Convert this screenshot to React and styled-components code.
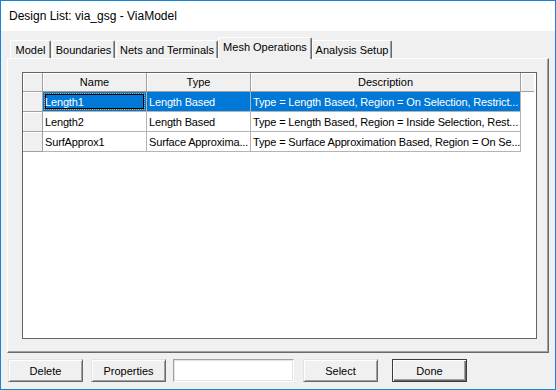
import React from 'react'
import styled, { createGlobalStyle } from 'styled-components'

const GlobalStyle = createGlobalStyle`
    html, body {
        margin: 0;
        padding: 0;
        background: #ffffff;
    }
    * {
        box-sizing: border-box;
    }
`

const Window = styled.div`
    width: 556px;
    height: 390px;
    border: 1px solid #1883d7;
    background: #f0f0f0;
    display: flex;
    flex-direction: column;
    font-family: 'Liberation Sans', Arial, sans-serif;
    font-size: 11px;
    color: #000;
`

const TitleBar = styled.div`
    height: 30px;
    background: #ffffff;
    display: flex;
    align-items: center;
    padding-left: 8px;
    padding-bottom: 1px;
    font-size: 12px;
`

const Body = styled.div`
    flex: 1;
    display: flex;
    flex-direction: column;
    padding: 5px 6px 7px 6px;
`

const TabStrip = styled.div`
    height: 22px;
    display: flex;
    align-items: flex-end;
    padding-left: 3px;
    position: relative;
    z-index: 1;
`

const Tab = styled.div`
    width: ${p => p.$width}px;
    height: ${p => (p.$active ? '22px' : '18px')};
    margin-right: ${p => (p.$active ? '0' : '1px')};
    margin-left: ${p => (p.$active ? '-1px' : '0')};
    margin-bottom: ${p => (p.$active ? '-1px' : '0')};
    padding-bottom: ${p => (p.$active ? '3px' : '0')};
    display: flex;
    align-items: center;
    justify-content: center;
    background: #f0f0f0;
    border-top: 1px solid #ffffff;
    border-left: 1px solid #ffffff;
    border-right: 1px solid #696969;
    box-shadow: inset -1px 0 0 #a0a0a0;
    border-radius: 2px 2px 0 0;
    white-space: nowrap;
`

const Panel = styled.div`
    height: 295px;
    display: flex;
    flex-direction: column;
    border-top: 1px solid #ffffff;
    border-left: 1px solid #ffffff;
    border-right: 1px solid #696969;
    border-bottom: 1px solid #696969;
    box-shadow: inset -1px -1px 0 #a0a0a0;
    padding: 13px 11px 13px 14px;
`

const Grid = styled.div`
    flex: 1;
    background: #ffffff;
    border: 1px solid #646464;
    display: flex;
    flex-direction: column;
`

const Row = styled.div`
    display: flex;
    height: ${p => p.$height}px;
`

const HeadCell = styled.div`
    width: ${p => p.$width}px;
    background: #f0f0f0;
    border-right: ${p => (p.$last ? 'none' : '1px solid #a0a0a0')};
    border-bottom: 1px solid #a0a0a0;
    box-shadow: inset 1px 1px 0 #ffffff;
    display: flex;
    align-items: center;
    justify-content: center;
    white-space: nowrap;
    overflow: hidden;
`

const Cell = styled.div`
    width: ${p => p.$width}px;
    background: ${p => (p.$selected ? '#0078d7' : '#ffffff')};
    color: ${p => (p.$selected ? '#ffffff' : '#000000')};
    border-right: 1px solid #b4b4b4;
    border-bottom: 1px solid #b4b4b4;
    display: flex;
    align-items: center;
    padding-left: 2px;
    letter-spacing: -0.15px;
    white-space: nowrap;
    overflow: hidden;
    position: relative;
`

const FocusRect = styled.span`
    position: absolute;
    inset: 1px;
    box-shadow: inset 0 0 0 1px #000000;
    border: 1px dotted #f0a030;
`

const CellText = styled.span`
    position: relative;
`

const ButtonBar = styled.div`
    display: flex;
    align-items: center;
    height: 23px;
    margin-top: 6px;
    padding-left: 1px;
`

const Button = styled.div`
    width: 75px;
    height: 23px;
    margin-left: ${p => p.$gap || 0}px;
    display: flex;
    align-items: center;
    justify-content: center;
    background: #f0f0f0;
    border: 1px solid;
    border-color: ${p => (p.$default ? '#3c3c3c' : '#e3e3e3 #696969 #696969 #e3e3e3')};
    box-shadow: ${p =>
        p.$default
            ? 'inset 1px 1px 0 #ffffff, inset -1px -1px 0 #696969, inset -2px -2px 0 #a0a0a0'
            : 'inset 1px 1px 0 #ffffff, inset -1px -1px 0 #a0a0a0'};
`

const TextBox = styled.div`
    width: 121px;
    height: 23px;
    margin-left: ${p => p.$gap}px;
    background: #ffffff;
    border: 1px solid;
    border-color: #a0a0a0 #ffffff #ffffff #a0a0a0;
    box-shadow: inset 1px 1px 0 #e3e3e3, inset -1px -1px 0 #e3e3e3;
`

const columns = [
    { key: 'name', label: 'Name', width: 104 },
    { key: 'type', label: 'Type', width: 104 },
    { key: 'desc', label: 'Description', width: 270 },
]

const rows = [
    {
        name: 'Length1',
        type: 'Length Based',
        desc: 'Type = Length Based, Region = On Selection, Restrict...',
    },
    {
        name: 'Length2',
        type: 'Length Based',
        desc: 'Type = Length Based, Region = Inside Selection, Rest...',
    },
    {
        name: 'SurfApprox1',
        type: 'Surface Approxima...',
        desc: 'Type = Surface Approximation Based, Region = On Se...',
    },
]

const tabs = [
    { label: 'Model', width: 41 },
    { label: 'Boundaries', width: 63 },
    { label: 'Nets and Terminals', width: 102 },
    { label: 'Mesh Operations', width: 94, active: true },
    { label: 'Analysis Setup', width: 80 },
]

const App = () => {
    return (
        <>
            <GlobalStyle />
            <Window>
                <TitleBar>Design List: via_gsg - ViaModel</TitleBar>
                <Body>
                    <TabStrip>
                        {tabs.map(t => (
                            <Tab key={t.label} $width={t.width} $active={t.active}>{t.label}</Tab>
                        ))}
                    </TabStrip>
                    <Panel>
                        <Grid>
                            <Row $height={19}>
                                <HeadCell $width={20} />
                                {columns.map(c => (
                                    <HeadCell key={c.key} $width={c.width}>{c.label}</HeadCell>
                                ))}
                                <HeadCell $width={13} $last />
                            </Row>
                            {rows.map((r, i) => (
                                <Row key={r.name} $height={20}>
                                    <HeadCell $width={20} />
                                    {columns.map(c => (
                                        <Cell key={c.key} $width={c.width} $selected={i === 0}>
                                            {i === 0 && c.key === 'name' && <FocusRect />}
                                            <CellText>{r[c.key]}</CellText>
                                        </Cell>
                                    ))}
                                </Row>
                            ))}
                        </Grid>
                    </Panel>
                    <ButtonBar>
                        <Button>Delete</Button>
                        <Button $gap={8}>Properties</Button>
                        <TextBox $gap={7} />
                        <Button $gap={9}>Select</Button>
                        <Button $gap={14} $default>Done</Button>
                    </ButtonBar>
                </Body>
            </Window>
        </>
    )
}

export default App
